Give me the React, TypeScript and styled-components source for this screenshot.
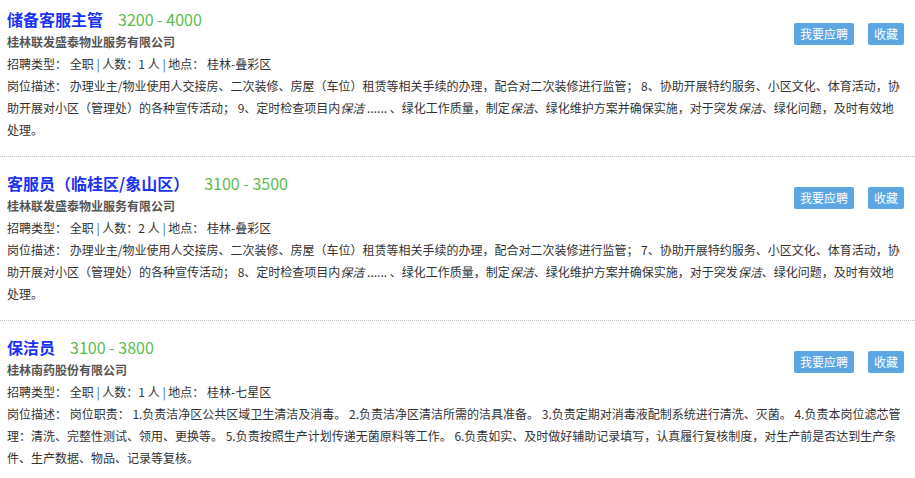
import React from "react";
import styled, { createGlobalStyle } from "styled-components";

const Global = createGlobalStyle`
  html, body { margin: 0; padding: 0; background: #fff; }
  body {
    font-family: "Microsoft YaHei", "Noto Sans CJK SC", "Noto Sans", sans-serif;
    color: #333;
    font-size: 12px;
  }
`;

const List = styled.div`
  display: flex;
  flex-direction: column;
`;

const Item = styled.section`
  padding: 14px 11px 15px 7px;
  border-bottom: 1px dotted #c4c4c4;
  &:first-child { padding-top: 7px; }
`;

const Head = styled.div`
  display: flex;
  align-items: flex-start;
`;

const HeadMain = styled.div`
  flex: 1;
  min-width: 0;
`;

const TitleRow = styled.div`
  display: flex;
  align-items: baseline;
  height: 24px;
  line-height: 24px;
`;

const Title = styled.a`
  font-size: 16px;
  font-weight: bold;
  color: #1a33f2;
  text-decoration: none;
`;

const Salary = styled.span`
  font-size: 16px;
  color: #5cbb4c;
  margin-left: 15px;
`;

const Company = styled.div`
  font-weight: bold;
  color: #555;
  line-height: 22px;
`;

const Info = styled.div`
  color: #333;
  line-height: 22px;
`;

const Pipe = styled.span`
  color: #2f6db0;
`;

const Actions = styled.div`
  display: flex;
  gap: 14px;
  margin-top: 16px;
`;

const Btn = styled.button`
  font-family: inherit;
  font-size: 12px;
  color: #fff;
  background: #5ca6e3;
  border: none;
  border-radius: 2px;
  height: 22px;
  line-height: 22px;
  padding: 0 6px;
  cursor: pointer;
`;

const Desc = styled.p`
  margin: 0;
  line-height: 22px;
  color: #333;
  em { font-style: italic; }
`;

type Job = {
  title: string;
  salary: string;
  company: string;
  people: string;
  place: string;
  desc: React.ReactNode;
};

const jobs: Job[] = [
  {
    title: "储备客服主管",
    salary: "3200 - 4000",
    company: "桂林联发盛泰物业服务有限公司",
    people: "1",
    place: "桂林-叠彩区",
    desc: (
      <>
        岗位描述： 办理业主/物业使用人交接房、二次装修、房屋（车位）租赁等相关手续的办理，配合对二次装修进行监管； 8、协助开展特约服务、小区文化、体育活动，协助开展对小区（管理处）的各种宣传活动； 9、定时检查项目内<em>保洁</em> ...... 、绿化工作质量，制定<em>保洁</em>、绿化维护方案并确保实施，对于突发<em>保洁</em>、绿化问题，及时有效地处理。
      </>
    ),
  },
  {
    title: "客服员（临桂区/象山区）",
    salary: "3100 - 3500",
    company: "桂林联发盛泰物业服务有限公司",
    people: "2",
    place: "桂林-叠彩区",
    desc: (
      <>
        岗位描述： 办理业主/物业使用人交接房、二次装修、房屋（车位）租赁等相关手续的办理，配合对二次装修进行监管； 7、协助开展特约服务、小区文化、体育活动，协助开展对小区（管理处）的各种宣传活动； 8、定时检查项目内<em>保洁</em> ...... 、绿化工作质量，制定<em>保洁</em>、绿化维护方案并确保实施，对于突发<em>保洁</em>、绿化问题，及时有效地处理。
      </>
    ),
  },
  {
    title: "保洁员",
    salary: "3100 - 3800",
    company: "桂林南药股份有限公司",
    people: "1",
    place: "桂林-七星区",
    desc: (
      <>
        岗位描述： 岗位职责： 1.负责洁净区公共区域卫生清洁及消毒。 2.负责洁净区清洁所需的洁具准备。 3.负责定期对消毒液配制系统进行清洗、灭菌。 4.负责本岗位滤芯管理：清洗、完整性测试、领用、更换等。 5.负责按照生产计划传递无菌原料等工作。 6.负责如实、及时做好辅助记录填写，认真履行复核制度，对生产前是否达到生产条件、生产数据、物品、记录等复核。
      </>
    ),
  },
];

export default function App() {
  return (
    <>
      <Global />
      <List>
        {jobs.map((j, i) => (
          <Item key={i}>
            <Head>
              <HeadMain>
                <TitleRow>
                  <Title href="#">{j.title}</Title>
                  <Salary>{j.salary}</Salary>
                </TitleRow>
                <Company>{j.company}</Company>
                <Info>
                  招聘类型： 全职 <Pipe>|</Pipe> 人数：{j.people} 人 <Pipe>|</Pipe> 地点： {j.place}
                </Info>
              </HeadMain>
              <Actions>
                <Btn>我要应聘</Btn>
                <Btn>收藏</Btn>
              </Actions>
            </Head>
            <Desc>{j.desc}</Desc>
          </Item>
        ))}
      </List>
    </>
  );
}
